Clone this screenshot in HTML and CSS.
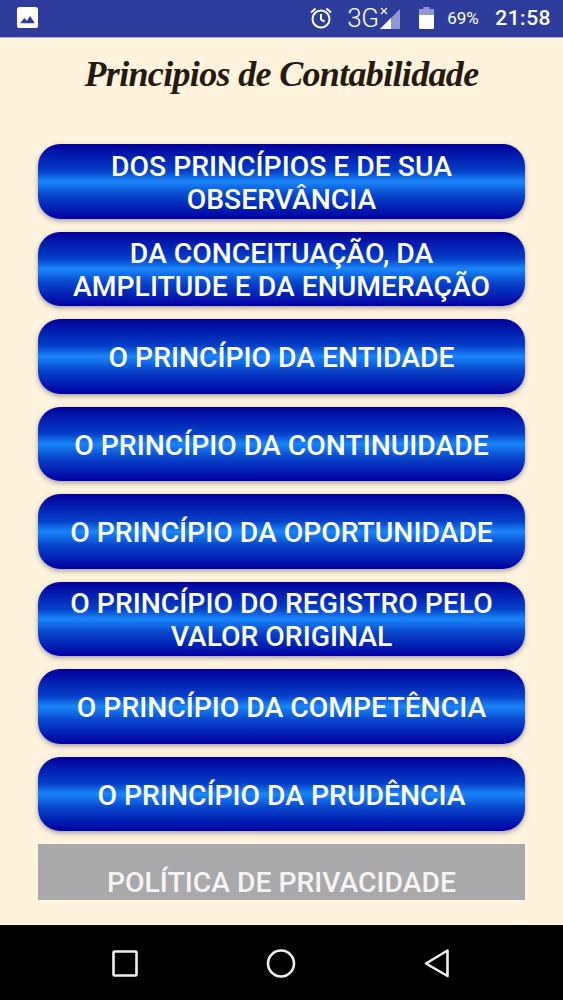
FILE: index.html
```html
<!DOCTYPE html>
<html lang="pt">
<head>
<meta charset="utf-8">
<title>Principios de Contabilidade</title>
<link rel="stylesheet" href="styles.css">
</head>
<body>
<div class="screen">
  <header class="status">
    <svg class="ic-pic" viewBox="0 0 20 20"><rect x="0" y="0" width="20" height="20" rx="2.500" fill="#fff"/><path d="M3 15.500 L7 10.500 L9.500 13 L12.500 8.500 L17 15.500 Z" fill="#2e3d9c"/></svg>
    <span class="status-right">
      <svg class="ic-alarm" viewBox="0 0 24 24" fill="none" stroke="#fff" stroke-width="2"><circle cx="12" cy="13" r="8.500"/><path d="M12 8v5.500l3.500 2.200"/><path d="M2 6.500 6.500 2.500M22 6.500 17.500 2.500"/></svg>
      <span class="net">3G</span>
      <svg class="ic-signal" viewBox="0 0 22 24"><path d="M21 3V23H1Z" fill="#8f98d0"/><path d="M12 12V23H1Z" fill="#fff"/><path d="M2 2 8 8M8 2 2 8" stroke="#fff" stroke-width="1.300"/></svg>
      <svg class="ic-batt" viewBox="0 0 15 22"><rect x="4.500" y="0" width="6" height="3" fill="#8f98d0"/><rect x="0" y="2" width="15" height="20" rx="1" fill="#fff"/><rect x="0" y="2" width="15" height="6" fill="#8f98d0"/></svg>
      <span class="pct">69%</span>
      <span class="time">21:58</span>
    </span>
  </header>
  <main class="content">
    <h1 class="title">Principios de Contabilidade</h1>
    <nav class="menu">
      <button class="btn">DOS PRINCÍPIOS E DE SUA OBSERVÂNCIA</button>
      <button class="btn">DA CONCEITUAÇÃO, DA AMPLITUDE E DA ENUMERAÇÃO</button>
      <button class="btn">O PRINCÍPIO DA ENTIDADE</button>
      <button class="btn">O PRINCÍPIO DA CONTINUIDADE</button>
      <button class="btn">O PRINCÍPIO DA OPORTUNIDADE</button>
      <button class="btn">O PRINCÍPIO DO REGISTRO PELO VALOR ORIGINAL</button>
      <button class="btn">O PRINCÍPIO DA COMPETÊNCIA</button>
      <button class="btn">O PRINCÍPIO DA PRUDÊNCIA</button>
      <div class="privacy">POLÍTICA DE PRIVACIDADE</div>
    </nav>
  </main>
  <footer class="navbar">
    <svg class="nav-ic" viewBox="0 0 30 30" fill="none" stroke="#eee" stroke-width="2.600" stroke-linejoin="round"><rect x="3.500" y="3.500" width="23" height="24" rx="1"/></svg>
    <svg class="nav-ic" viewBox="0 0 30 30" fill="none" stroke="#eee" stroke-width="2.600"><circle cx="15" cy="15.500" r="13"/></svg>
    <svg class="nav-ic" viewBox="0 0 30 30" fill="none" stroke="#eee" stroke-width="2.600" stroke-linejoin="round"><path d="M25.500 2.500V28L4 15.500Z"/></svg>
  </footer>
</div>
</body>
</html>
```
FILE: styles.css
```css
* { box-sizing: border-box; }
html, body { margin: 0; padding: 0; }
.screen {
  width: 563px; height: 1000px; display: flex; flex-direction: column;
  background: #fff3dd; font-family: Roboto, sans-serif; overflow: hidden;
}
.status {
  height: 38px; flex: none; background: #2e3d9c; border-bottom: 1px solid #a9aee0;
  display: flex; align-items: center; justify-content: space-between;
  padding: 0 12px 2px 17px; color: #fff;
}
.ic-pic { width: 21px; height: 21px; display: block; }
.status-right { display: flex; align-items: center; }
.ic-alarm { width: 24px; height: 24px; margin-right: 14px; }
.net { font-size: 26px; font-weight: 300; letter-spacing: -0.5px; width: 32px; }
.ic-signal { width: 22px; height: 24px; margin-right: 18px; }
.ic-batt { width: 15px; height: 22px; margin-right: 13px; }
.pct { font-size: 17px; margin-right: 15px; width: 33px; font-weight: 400; }
.time { font-size: 21px; font-weight: 500; letter-spacing: 0.5px; }
.content { flex: 1; display: flex; flex-direction: column; align-items: center; min-height: 0; }
.title {
  margin: 12px 0 0; height: 94px; font-family: "Liberation Serif", serif;
  font-style: italic; font-weight: 700; font-size: 36px; line-height: 48px;
  color: #241a12; text-align: center; letter-spacing: -0.67px;
}
.menu { width: 487px; display: flex; flex-direction: column; gap: 13px; }
.btn {
  height: 74.5px; width: 100%; border: 0; border-radius: 22px; padding: 3px 30px 0;
  font-family: Roboto, sans-serif; font-weight: 500; font-size: 28.3px; line-height: 33px;
  color: #fff; text-align: center;
  background: linear-gradient(180deg, #00009a 0%, #0540c8 36%, #1a86fa 50%, #0846cc 68%, #0000a0 100%);
  box-shadow: 0 2px 5px rgba(60, 50, 90, .45);
}
.privacy {
  height: 56px; background: #a9a8aa; color: #f6f3f3; text-align: center;
  font-weight: 500; font-size: 28.3px; line-height: 33px; padding-top: 22px; overflow: hidden;
}
.navbar {
  height: 75px; flex: none; background: #000; display: flex; align-items: center;
  padding: 0 0 0 110px; gap: 126px;
}
.nav-ic { width: 30px; height: 30px; display: block; }
```
